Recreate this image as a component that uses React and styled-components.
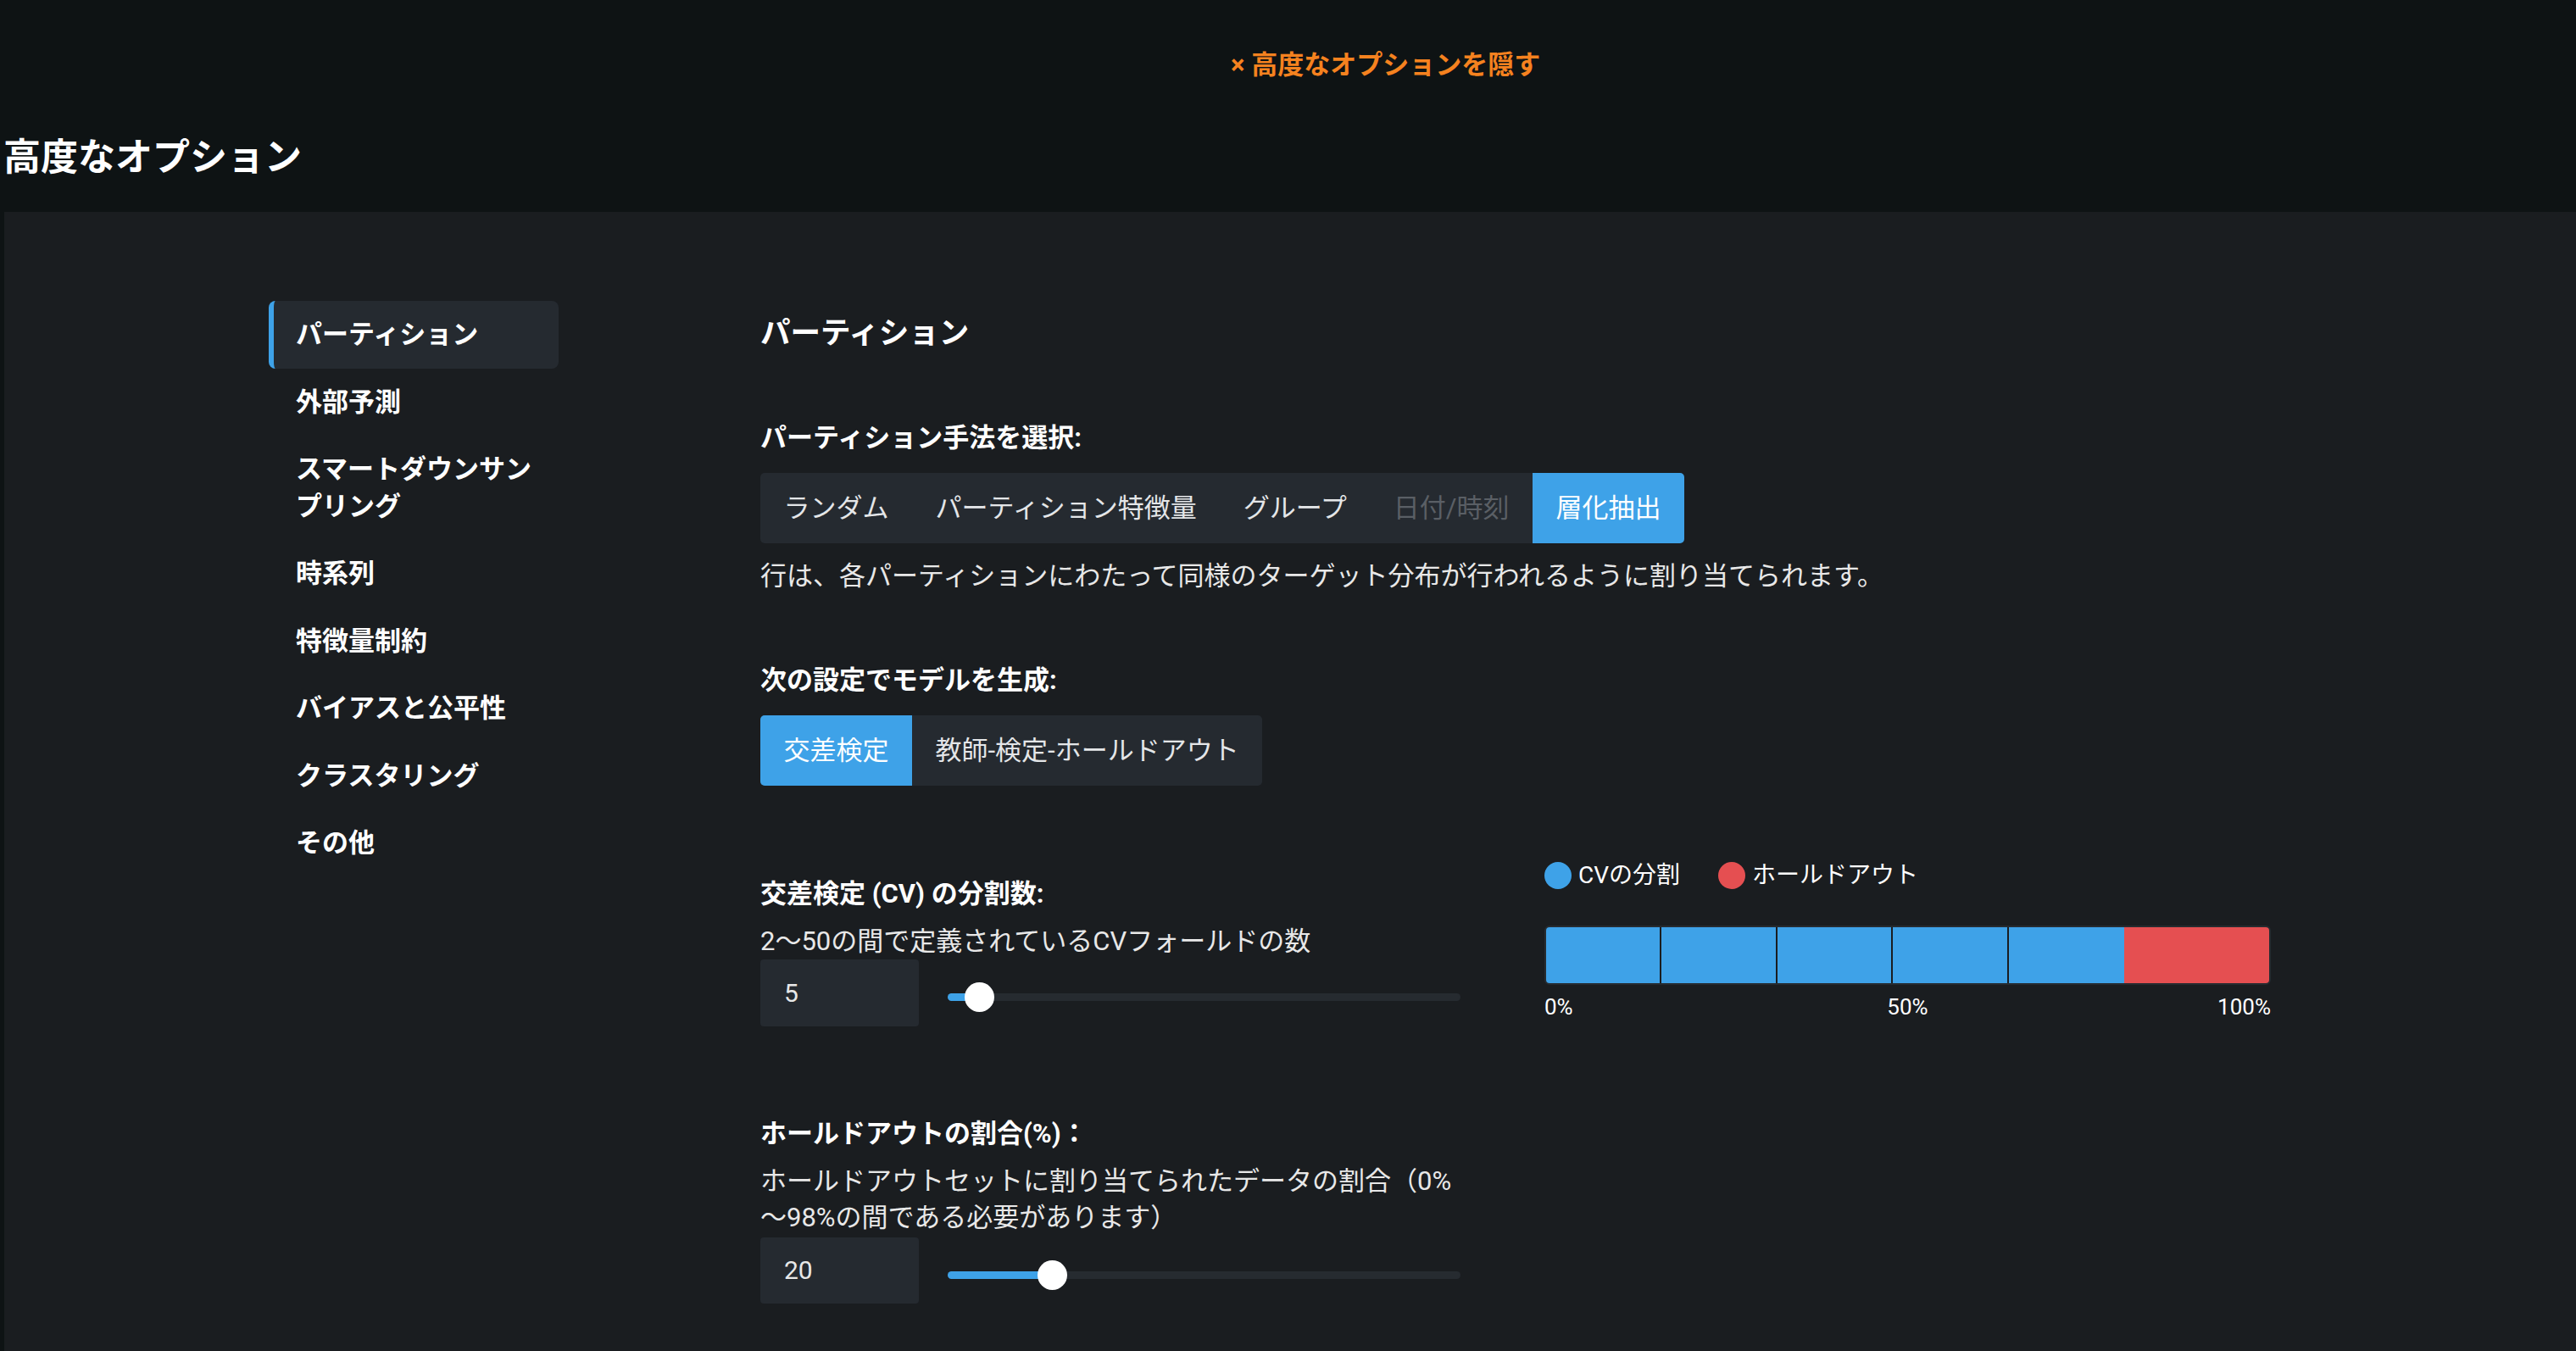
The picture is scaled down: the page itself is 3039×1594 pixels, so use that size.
import React from "react";
import styled, { createGlobalStyle } from "styled-components";

const GlobalStyle = createGlobalStyle`
	* {
		box-sizing: border-box;
	}
	html,
	body {
		margin: 0;
		padding: 0;
		background: #0e1314;
	}
	body {
		font-family: Roboto, "Noto Sans CJK JP", sans-serif;
		color: #e8e8e8;
	}
`;

const NAV_ITEMS = [
	"パーティション",
	"外部予測",
	"スマートダウンサンプリング",
	"時系列",
	"特徴量制約",
	"バイアスと公平性",
	"クラスタリング",
	"その他",
];

const METHODS = [
	{ label: "ランダム" },
	{ label: "パーティション特徴量" },
	{ label: "グループ" },
	{ label: "日付/時刻", disabled: true },
	{ label: "層化抽出", selected: true },
];

const MODES = [
	{ label: "交差検定", selected: true },
	{ label: "教師-検定-ホールドアウト" },
];

const FOLDS = 5;
const HOLDOUT = 20;

const Slider = ({ value, min, max }) => {
	const pct = ((value - min) / (max - min)) * 100;
	return (
		<SliderWrap>
			<Track>
				<Fill style={{ width: `${pct}%` }} />
			</Track>
			<Thumb style={{ left: `calc(${pct}% - 17.5px)` }} />
		</SliderWrap>
	);
};

const App = () => {
	const cvShare = (100 - HOLDOUT) / FOLDS;

	return (
		<>
			<GlobalStyle />
			<Header>
				<HideLink>× 高度なオプションを隠す</HideLink>
				<PageTitle>高度なオプション</PageTitle>
			</Header>
			<Panel>
				<Sidebar>
					{NAV_ITEMS.map((item, i) => (
						<NavItem key={item} $active={i === 0}>
							{item}
						</NavItem>
					))}
				</Sidebar>
				<Main>
					<Heading>パーティション</Heading>

					<Section $top={64}>
						<FieldLabel>パーティション手法を選択:</FieldLabel>
						<Segmented>
							{METHODS.map((m) => (
								<SegmentButton
									key={m.label}
									$selected={m.selected}
									$disabled={m.disabled}
								>
									{m.label}
								</SegmentButton>
							))}
						</Segmented>
						<Hint $top={17}>
							行は、各パーティションにわたって同様のターゲット分布が行われるように割り当てられます。
						</Hint>
					</Section>

					<Section $top={80}>
						<FieldLabel>次の設定でモデルを生成:</FieldLabel>
						<Segmented>
							{MODES.map((m) => (
								<SegmentButton key={m.label} $selected={m.selected}>
									{m.label}
								</SegmentButton>
							))}
						</Segmented>
					</Section>

					<SplitRow>
						<Settings>
							<FieldLabel>交差検定 (CV) の分割数:</FieldLabel>
							<Hint $top={13}>2～50の間で定義されているCVフォールドの数</Hint>
							<Controls>
								<NumberBox>{FOLDS}</NumberBox>
								<Slider value={FOLDS} min={2} max={50} />
							</Controls>

							<Section $top={105}>
								<FieldLabel>ホールドアウトの割合(%)：</FieldLabel>
								<Hint $top={13}>
									ホールドアウトセットに割り当てられたデータの割合（0%～98%の間である必要があります）
								</Hint>
								<Controls $top={2}>
									<NumberBox $h={78}>{HOLDOUT}</NumberBox>
									<Slider value={HOLDOUT} min={0} max={98} />
								</Controls>
							</Section>
						</Settings>

						<Preview>
							<Legend>
								<LegendItem>
									<Dot $color="#3ea2e8" />
									CVの分割
								</LegendItem>
								<LegendItem>
									<Dot $color="#e54f51" />
									ホールドアウト
								</LegendItem>
							</Legend>
							<Bar>
								{Array.from({ length: FOLDS }).map((_, i) => (
									<BarSegment
										key={i}
										$color="#3ea2e8"
										$divider={i < FOLDS - 1}
										style={{ width: `${cvShare}%` }}
									/>
								))}
								<BarSegment $color="#e54f51" style={{ width: `${HOLDOUT}%` }} />
							</Bar>
							<Axis>
								<span>0%</span>
								<span>50%</span>
								<span>100%</span>
							</Axis>
						</Preview>
					</SplitRow>
				</Main>
			</Panel>
		</>
	);
};

const Header = styled.header`
	display: flex;
	flex-direction: column;
	height: 250px;
	padding: 57px 0 36px 4px;
	background: #0e1314;
`;

const HideLink = styled.a`
	align-self: flex-start;
	margin-left: 1448px;
	font-size: 31px;
	line-height: 40px;
	font-weight: 700;
	color: #f5821f;
	cursor: pointer;
`;

const PageTitle = styled.h1`
	margin: 61px 0 0;
	font-size: 44px;
	line-height: 56px;
	font-weight: 700;
	color: #ffffff;
`;

const Panel = styled.section`
	display: flex;
	align-items: flex-start;
	margin-left: 5px;
	min-height: calc(100vh - 250px);
	padding: 105px 0 60px 312px;
	background: #1a1d20;
`;

const Sidebar = styled.nav`
	display: flex;
	flex-direction: column;
	width: 342px;
	flex-shrink: 0;
`;

const NavItem = styled.div`
	padding: 18px 20px 18px 26px;
	border-left: 6px solid ${(p) => (p.$active ? "#3ea2e8" : "transparent")};
	border-radius: 8px;
	background: ${(p) => (p.$active ? "#252a30" : "transparent")};
	font-size: 31px;
	line-height: 43.5px;
	font-weight: 700;
	color: #ffffff;
	cursor: pointer;
`;

const Main = styled.main`
	flex: 1;
	margin-left: 238px;
`;

const Heading = styled.h2`
	margin: 0;
	font-size: 35.5px;
	line-height: 76px;
	font-weight: 700;
	color: #ffffff;
`;

const Section = styled.div`
	margin-top: ${(p) => p.$top || 0}px;
`;

const FieldLabel = styled.div`
	font-size: 31px;
	line-height: 43px;
	font-weight: 700;
	color: #ffffff;
`;

const Segmented = styled.div`
	display: inline-flex;
	margin-top: 20px;
	border-radius: 5px;
	overflow: hidden;
	background: #252a30;
`;

const SegmentButton = styled.div`
	padding: 20px 27.5px;
	font-size: 31px;
	line-height: 43px;
	white-space: nowrap;
	background: ${(p) => (p.$selected ? "#3ea2e8" : "transparent")};
	color: ${(p) =>
		p.$selected ? "#ffffff" : p.$disabled ? "#5a5f65" : "#e4e6e8"};
	cursor: ${(p) => (p.$disabled ? "default" : "pointer")};
`;

const Hint = styled.p`
	margin: ${(p) => p.$top || 0}px 0 0;
	font-size: 31px;
	line-height: 43px;
	color: #e8e8e8;
`;

const SplitRow = styled.div`
	display: flex;
	align-items: flex-start;
	gap: 99px;
	margin-top: 84px;
`;

const Settings = styled.div`
	width: 826px;
	flex-shrink: 0;
	padding-top: 22px;
`;

const Controls = styled.div`
	display: flex;
	align-items: center;
	gap: 34px;
	margin-top: ${(p) => p.$top || 0}px;
`;

const NumberBox = styled.div`
	width: 187px;
	height: ${(p) => p.$h || 79}px;
	padding-left: 28px;
	border-radius: 4px;
	background: #252a30;
	font-size: 30px;
	line-height: ${(p) => p.$h || 79}px;
	color: #e8e8e8;
`;

const SliderWrap = styled.div`
	position: relative;
	flex: 1;
	height: 35px;
	margin-top: 10px;
`;

const Track = styled.div`
	position: absolute;
	left: 0;
	right: 0;
	top: 13px;
	height: 9px;
	border-radius: 5px;
	background: #262b30;
	overflow: hidden;
`;

const Fill = styled.div`
	height: 100%;
	background: #3ea2e8;
`;

const Thumb = styled.div`
	position: absolute;
	top: 0;
	width: 35px;
	height: 35px;
	border-radius: 50%;
	background: #ffffff;
`;

const Preview = styled.div`
	width: 857px;
	flex-shrink: 0;
`;

const Legend = styled.div`
	display: flex;
	gap: 45px;
	font-size: 28px;
	line-height: 43px;
	color: #ffffff;
`;

const LegendItem = styled.div`
	display: flex;
	align-items: center;
	gap: 8px;
`;

const Dot = styled.span`
	width: 32px;
	height: 32px;
	border-radius: 50%;
	background: ${(p) => p.$color};
`;

const Bar = styled.div`
	display: flex;
	height: 70px;
	margin-top: 38px;
	border: 2px solid #262b30;
	border-radius: 6px;
	overflow: hidden;
`;

const BarSegment = styled.div`
	height: 100%;
	background: ${(p) => p.$color};
	border-right: ${(p) => (p.$divider ? "2px solid #1a1d20" : "none")};
`;

const Axis = styled.div`
	display: grid;
	grid-template-columns: 1fr auto 1fr;
	margin-top: 8px;
	font-size: 26px;
	line-height: 36px;
	color: #ffffff;

	span:last-child {
		justify-self: end;
	}
`;

export default App;
